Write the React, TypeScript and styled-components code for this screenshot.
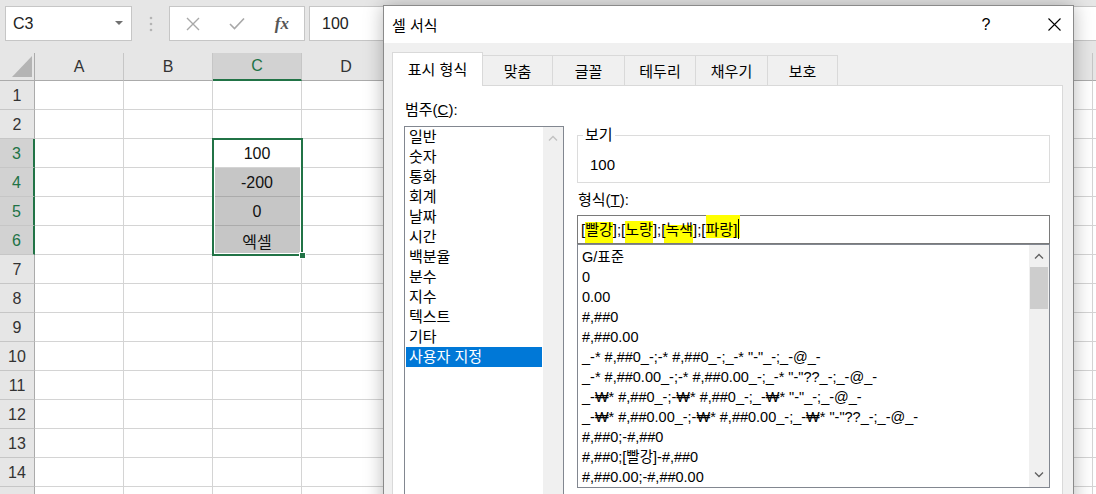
import styled, { createGlobalStyle } from "styled-components";

const GREEN = "#217346";

const GlobalStyle = createGlobalStyle`
  html, body {
    margin: 0;
    padding: 0;
  }
  body {
    width: 1096px;
    height: 494px;
    overflow: hidden;
    background: #ffffff;
    font-family: "Liberation Sans", "Noto Sans CJK KR", sans-serif;
  }
  * {
    box-sizing: border-box;
  }
`;

const Screen = styled.div`
  position: relative;
  width: 1096px;
  height: 494px;
  overflow: hidden;
  background: #e6e6e6;
`;

/* ---------- excel formula bar ---------- */
const FormulaBar = styled.div`
  display: flex;
  height: 53px;
  padding: 6px 0 12px 5px;
`;

const NameBox = styled.div`
  width: 127px;
  display: flex;
  align-items: center;
  justify-content: space-between;
  padding: 0 8px 0 7px;
  background: #fff;
  border: 1px solid #c6c6c6;
  font-size: 16px;
  color: #222;
`;

const DropCaret = styled.span`
  width: 0;
  height: 0;
  border-left: 4px solid transparent;
  border-right: 4px solid transparent;
  border-top: 4px solid #707070;
  margin-bottom: 2px;
`;

const Grip = styled.div`
  width: 37px;
  display: flex;
  align-items: center;
  justify-content: center;
`;

const ButtonBox = styled.div`
  width: 136px;
  display: flex;
  align-items: center;
  padding-left: 1px;
  background: #fff;
  border: 1px solid #c6c6c6;
`;

const BarButton = styled.div`
  width: 45px;
  display: flex;
  align-items: center;
  justify-content: center;
`;

const Fx = styled.span`
  font-family: "Liberation Serif", serif;
  font-style: italic;
  font-weight: bold;
  font-size: 17px;
  color: #555;
`;

const FormulaInput = styled.div`
  flex: 1;
  margin-left: 4px;
  display: flex;
  align-items: center;
  padding-left: 12px;
  background: #fff;
  border: 1px solid #c6c6c6;
  border-right: none;
  font-size: 16px;
  color: #222;
`;

/* ---------- excel grid ---------- */
const Grid = styled.div`
  position: relative;
  display: grid;
  grid-template-columns: 35px repeat(11, 89px) 79px 89px;
  grid-template-rows: 28px;
  grid-auto-rows: 29px;
  background: #fff;
`;

const ColHead = styled.div<{ $sel?: boolean }>`
  display: flex;
  align-items: center;
  justify-content: center;
  background: ${(p) => (p.$sel ? "#d2d2d2" : "#e6e6e6")};
  border-right: 1px solid #c6c6c6;
  border-bottom: ${(p) => (p.$sel ? `2px solid ${GREEN}` : "1px solid #ababab")};
  font-size: 16px;
  color: ${(p) => (p.$sel ? GREEN : "#333")};
`;

const Corner = styled.div`
  display: flex;
  align-items: flex-end;
  justify-content: flex-end;
  padding: 0 2px 3px 0;
  background: #e6e6e6;
  border-right: 1px solid #ababab;
  border-bottom: 1px solid #ababab;
`;

const RowHead = styled.div<{ $sel?: boolean }>`
  display: flex;
  align-items: center;
  justify-content: center;
  padding-top: 2px;
  background: ${(p) => (p.$sel ? "#d2d2d2" : "#e6e6e6")};
  border-right: ${(p) => (p.$sel ? `2px solid ${GREEN}` : "1px solid #ababab")};
  border-bottom: 1px solid #c6c6c6;
  font-size: 16px;
  color: ${(p) => (p.$sel ? GREEN : "#333")};
`;

const Cell = styled.div<{ $shade?: boolean }>`
  display: flex;
  align-items: center;
  justify-content: center;
  padding-top: 2px;
  background: ${(p) => (p.$shade ? "#c6c6c6" : "#fff")};
  border-right: 1px solid #d4d4d4;
  border-bottom: 1px solid ${(p) => (p.$shade ? "#ababab" : "#d4d4d4")};
  font-size: 16px;
  color: #111;
`;

const Selection = styled.div`
  position: absolute;
  left: 212px;
  top: 85px;
  width: 91px;
  height: 118px;
  border: 2px solid ${GREEN};
  box-shadow: inset 0 0 0 1px #fff;
  pointer-events: none;
`;

const FillHandle = styled.div`
  position: absolute;
  right: -5px;
  bottom: -5px;
  width: 7px;
  height: 7px;
  background: ${GREEN};
  border: 1px solid #fff;
`;

/* ---------- dialog ---------- */
const Dialog = styled.div`
  position: absolute;
  left: 383px;
  top: 5px;
  width: 691px;
  height: 540px;
  display: flex;
  flex-direction: column;
  background: #f0f0f0;
  border: 1px solid #8a8a8a;
  box-shadow: 0 0 18px rgba(0, 0, 0, 0.28);
  font-family: "Liberation Sans", "Noto Sans CJK KR", sans-serif;
  font-size: 15px;
  color: #000;
`;

const TitleBar = styled.div`
  height: 37px;
  display: flex;
  align-items: center;
  padding-left: 8px;
  background: #fff;
`;

const Title = styled.span`
  flex: 1;
`;

const TitleButton = styled.div<{ $w: number }>`
  width: ${(p) => p.$w}px;
  display: flex;
  justify-content: center;
  align-items: center;
  font-size: 16px;
`;

const Body = styled.div`
  flex: 1;
  display: flex;
  flex-direction: column;
  padding: 9px 10px 0 8px;
`;

const TabRow = styled.div`
  height: 33px;
  display: flex;
  align-items: flex-end;
`;

const Tab = styled.div<{ $active?: boolean; $w: number }>`
  position: relative;
  z-index: ${(p) => (p.$active ? 1 : 0)};
  width: ${(p) => p.$w}px;
  height: ${(p) => (p.$active ? 34 : 30)}px;
  margin-bottom: ${(p) => (p.$active ? -1 : 0)}px;
  display: flex;
  align-items: center;
  justify-content: center;
  padding-bottom: ${(p) => (p.$active ? 3 : 0)}px;
  background: ${(p) => (p.$active ? "#fff" : "#f0f0f0")};
  border: 1px solid #d9d9d9;
  border-bottom: none;
  border-left: ${(p) => (p.$active ? "1px solid #d9d9d9" : "none")};
`;

const Panel = styled.div`
  flex: 1;
  display: flex;
  gap: 13px;
  padding: 14px 0 0 11px;
  background: #fff;
  border: 1px solid #d9d9d9;
`;

const LeftCol = styled.div`
  width: 160px;
  display: flex;
  flex-direction: column;
`;

const RightCol = styled.div`
  width: 473px;
  display: flex;
  flex-direction: column;
  padding-top: 25px;
`;

const FieldLabel = styled.div<{ $gap: number }>`
  height: 20px;
  line-height: 20px;
  padding-left: 1px;
  margin-top: ${(p) => p.$gap}px;
`;

const ListBox = styled.div<{ $h: number; $gap?: number }>`
  height: ${(p) => p.$h}px;
  margin-top: ${(p) => p.$gap ?? 0}px;
  display: flex;
  background: #fff;
  border: 1px solid #828790;
`;

const Items = styled.div<{ $pad: string; $size: number }>`
  flex: 1;
  padding: ${(p) => p.$pad};
  font-family: "Liberation Sans", "DejaVu Sans", "Noto Sans CJK KR", sans-serif;
  font-size: ${(p) => p.$size}px;
  overflow: hidden;
`;

const Item = styled.div<{ $sel?: boolean; $indent: number }>`
  height: 20px;
  line-height: 20px;
  padding-left: ${(p) => p.$indent}px;
  white-space: pre;
  background: ${(p) => (p.$sel ? "#0078d7" : "transparent")};
  color: ${(p) => (p.$sel ? "#fff" : "#000")};
`;

const ScrollTrack = styled.div`
  width: 20px;
  display: flex;
  flex-direction: column;
  align-items: center;
  background: #f0f0f0;
`;

const ArrowBox = styled.div<{ $h: number }>`
  height: ${(p) => p.$h}px;
  display: flex;
  align-items: center;
  justify-content: center;
`;

const Thumb = styled.div`
  width: 18px;
  height: 42px;
  background: #cdcdcd;
`;

const Spacer = styled.div`
  flex: 1;
`;

const Preview = styled.fieldset`
  margin: 0;
  padding: 0 12px 7px 12px;
  border: 1px solid #dcdcdc;
`;

const Legend = styled.legend`
  margin-left: -7px;
  padding: 0 2px;
  line-height: 20px;
`;

const PreviewValue = styled.div`
  margin-top: 10px;
  line-height: 20px;
`;

const FormatInput = styled.div`
  position: relative;
  z-index: 0;
  height: 29px;
  margin-top: 5px;
  padding-left: 3px;
  line-height: 27px;
  background: #fff;
  border: 1px solid #7a7a7a;
  white-space: pre;
`;

const Mark = styled.span<{ $top: number; $h: number; $l?: number; $r?: number }>`
  position: relative;
  &::before {
    content: "";
    position: absolute;
    z-index: -1;
    left: ${(p) => p.$l ?? 0}px;
    right: ${(p) => p.$r ?? 0}px;
    top: ${(p) => p.$top}px;
    height: ${(p) => p.$h}px;
    background: #ffff00;
  }
`;

const Caret = styled.span`
  display: inline-block;
  width: 1px;
  height: 20px;
  margin-left: 1px;
  vertical-align: -4px;
  background: #000;
`;

const Chevron = ({ up, color }: { up?: boolean; color: string }) => (
  <svg width="10" height="6" viewBox="0 0 10 6">
    <polyline
      points={up ? "1,5.5 5,1.5 9,5.5" : "1,0.5 5,4.5 9,0.5"}
      fill="none"
      stroke={color}
      strokeWidth="1.3"
    />
  </svg>
);

const categories = [
  "일반",
  "숫자",
  "통화",
  "회계",
  "날짜",
  "시간",
  "백분율",
  "분수",
  "지수",
  "텍스트",
  "기타",
  "사용자 지정",
];

const formats = [
  "G/표준",
  "0",
  "0.00",
  "#,##0",
  "#,##0.00",
  '_-* #,##0_-;-* #,##0_-;_-* "-"_-;_-@_-',
  '_-* #,##0.00_-;-* #,##0.00_-;_-* "-"??_-;_-@_-',
  '_-₩* #,##0_-;-₩* #,##0_-;_-₩* "-"_-;_-@_-',
  '_-₩* #,##0.00_-;-₩* #,##0.00_-;_-₩* "-"??_-;_-@_-',
  "#,##0;-#,##0",
  "#,##0;[빨강]-#,##0",
  "#,##0.00;-#,##0.00",
];

const tabs = [
  { label: "표시 형식", w: 91 },
  { label: "맞춤", w: 70 },
  { label: "글꼴", w: 72 },
  { label: "테두리", w: 71 },
  { label: "채우기", w: 72 },
  { label: "보호", w: 70 },
];

const cols = ["A", "B", "C", "D", "E", "F", "G", "H", "I", "J", "K", "L", "M"];
const values: Record<number, string> = { 3: "100", 4: "-200", 5: "0", 6: "엑셀" };

const App = () => {
  const rows = Array.from({ length: 15 }, (_, i) => i + 1);
  return (
    <Screen>
      <GlobalStyle />
      <FormulaBar>
        <NameBox>
          C3
          <DropCaret />
        </NameBox>
        <Grip>
          <svg width="4" height="16" viewBox="0 0 4 16">
            <circle cx="2" cy="2" r="1.3" fill="#b4b4b4" />
            <circle cx="2" cy="8" r="1.3" fill="#b4b4b4" />
            <circle cx="2" cy="14" r="1.3" fill="#b4b4b4" />
          </svg>
        </Grip>
        <ButtonBox>
          <BarButton>
            <svg width="14" height="14" viewBox="0 0 14 14">
              <path d="M1 1 L13 13 M13 1 L1 13" stroke="#a8a8a8" strokeWidth="1.4" />
            </svg>
          </BarButton>
          <BarButton>
            <svg width="16" height="13" viewBox="0 0 16 13">
              <polyline points="1,7 5.5,11.5 15,1.5" fill="none" stroke="#a8a8a8" strokeWidth="1.6" />
            </svg>
          </BarButton>
          <BarButton>
            <Fx>fx</Fx>
          </BarButton>
        </ButtonBox>
        <FormulaInput>100</FormulaInput>
      </FormulaBar>

      <Grid>
        <Corner>
          <svg width="20" height="21" viewBox="0 0 20 21">
            <polygon points="20,0 20,21 0,21" fill="#b4b4b4" />
          </svg>
        </Corner>
        {cols.map((c) => (
          <ColHead key={c} $sel={c === "C"}>
            {c}
          </ColHead>
        ))}
        {rows.map((r) => [
          <RowHead key={`h${r}`} $sel={r >= 3 && r <= 6}>
            {r}
          </RowHead>,
          ...cols.map((c) => {
            const inSel = c === "C" && r >= 4 && r <= 6;
            return (
              <Cell key={`${c}${r}`} $shade={inSel}>
                {c === "C" ? values[r] : null}
              </Cell>
            );
          }),
        ])}
        <Selection>
          <FillHandle />
        </Selection>
      </Grid>

      <Dialog>
        <TitleBar>
          <Title>셀 서식</Title>
          <TitleButton $w={40}>?</TitleButton>
          <TitleButton $w={29} />
          <TitleButton $w={38}>
            <svg width="13" height="13" viewBox="0 0 13 13">
              <path d="M0.5 0.5 L12.5 12.5 M12.5 0.5 L0.5 12.5" stroke="#000" strokeWidth="1.1" />
            </svg>
          </TitleButton>
        </TitleBar>
        <Body>
          <TabRow>
            {tabs.map((t, i) => (
              <Tab key={t.label} $w={t.w} $active={i === 0}>
                {t.label}
              </Tab>
            ))}
          </TabRow>
          <Panel>
            <LeftCol>
              <FieldLabel $gap={0}>
                범주(<u>C</u>):
              </FieldLabel>
              <ListBox $h={400} $gap={6}>
                <Items $pad="0 1px" $size={15}>
                  {categories.map((c, i) => (
                    <Item key={c} $indent={3} $sel={i === categories.length - 1}>
                      {c}
                    </Item>
                  ))}
                </Items>
                <ScrollTrack>
                  <ArrowBox $h={22}>
                    <Chevron up color="#c2c2c2" />
                  </ArrowBox>
                </ScrollTrack>
              </ListBox>
            </LeftCol>
            <RightCol>
              <Preview>
                <Legend>보기</Legend>
                <PreviewValue>100</PreviewValue>
              </Preview>
              <FieldLabel $gap={7}>
                형식(<u>T</u>):
              </FieldLabel>
              <FormatInput>
                [<Mark $top={1} $h={21}>빨강</Mark>];[<Mark $top={0} $h={22}>노랑</Mark>];[
                <Mark $top={4} $h={18} $l={-1}>녹색</Mark>];[<Mark $top={-6} $h={23} $r={-7}>파랑</Mark>]
                <Caret />
              </FormatInput>
              <ListBox $h={244}>
                <Items $pad="2px 0 0 4px" $size={14.5}>
                  {formats.map((f) => (
                    <Item key={f} $indent={0}>
                      {f}
                    </Item>
                  ))}
                </Items>
                <ScrollTrack>
                  <ArrowBox $h={22}>
                    <Chevron up color="#606060" />
                  </ArrowBox>
                  <Thumb />
                  <Spacer />
                  <ArrowBox $h={24}>
                    <Chevron color="#606060" />
                  </ArrowBox>
                </ScrollTrack>
              </ListBox>
            </RightCol>
          </Panel>
        </Body>
      </Dialog>
    </Screen>
  );
};

export default App;
